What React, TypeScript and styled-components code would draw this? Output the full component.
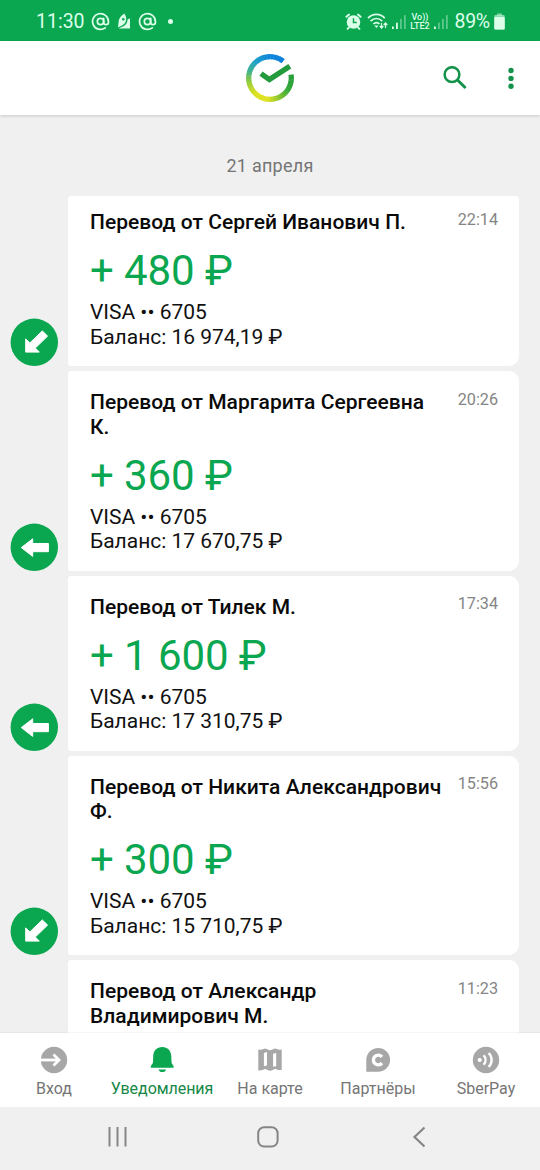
import React from "react";
import styled, { createGlobalStyle } from "styled-components";
import { AtSign } from "lucide-react";

const green = "#0aa650";

const GlobalStyle = createGlobalStyle`
  * { box-sizing: border-box; }
  body { margin: 0; background: #f0f0f0; font-family: Roboto, "Liberation Sans", sans-serif; }
`;

const Screen = styled.div`
  width: 540px;
  height: 1170px;
  display: flex;
  flex-direction: column;
  overflow: hidden;
  background: #f0f0f0;
`;

const StatusBar = styled.div`
  height: 41px;
  flex: none;
  display: flex;
  justify-content: space-between;
  align-items: center;
  padding: 2px 35.5px 0 36px;
  background: ${green};
  color: #dcffea;
  font-size: 19.5px;
`;

const StatusGroup = styled.div`
  display: flex;
  align-items: center;
  svg { display: block; flex: none; }
`;

const Clock = styled.span`
  width: 54.5px;
  white-space: nowrap;
`;

const StatusDot = styled.span`
  width: 5px;
  height: 5px;
  margin: -1px 0 0 11.5px;
  border-radius: 50%;
  background: #dcffea;
`;

const Network = styled.span`
  width: 22px;
  margin: 0 2px 0 3px;
  display: flex;
  flex-direction: column;
  align-items: center;
  font-size: 9px;
  line-height: 9px;
  font-weight: 500;
  white-space: nowrap;
`;

const Percent = styled.span`
  width: 39px;
  margin-left: 6.5px;
  letter-spacing: -0.3px;
  white-space: nowrap;
`;

const Header = styled.header`
  height: 74px;
  flex: none;
  position: relative;
  z-index: 1;
  display: grid;
  grid-template-columns: 1fr 48px 1fr;
  align-items: center;
  padding: 0 23px;
  background: #fff;
  box-shadow: 0 1px 3px rgba(0, 0, 0, 0.16);
  svg { display: block; }
`;

const Actions = styled.div`
  grid-column: 3;
  display: flex;
  justify-content: flex-end;
  align-items: center;
  gap: 38px;
`;

const Logo = styled.div`
  grid-column: 2;
`;

const Feed = styled.main`
  flex: 1;
  min-height: 0;
  overflow: hidden;
`;

const DateLabel = styled.div`
  height: 81px;
  padding-top: 40px;
  text-align: center;
  font-size: 18px;
  line-height: 21px;
  letter-spacing: 0.25px;
  color: #757575;
`;

const Row = styled.div`
  display: flex;
  align-items: flex-end;
  margin-bottom: 5px;
  padding: 0 21px 0 10px;
`;

const Badge = styled.div`
  width: 48px;
  height: 48px;
  margin-right: 10px;
  flex: none;
  svg { display: block; }
`;

const Card = styled.article<{ $first?: boolean }>`
  flex: 1;
  display: flex;
  align-items: flex-start;
  padding: ${(p) => (p.$first ? 14 : 19)}px 21px 17px 22px;
  background: #fff;
  border-radius: ${(p) => (p.$first ? "3px 4px 10px 3px" : "3px 10px 10px 3px")};
`;

const Body = styled.div`
  width: 353px;
  font-size: 21px;
  line-height: 24.5px;
  letter-spacing: -0.02px;
  color: #111;
`;

const Title = styled.h2`
  margin: 0;
  font-size: 21px;
  line-height: 24.5px;
  font-weight: 500;
  letter-spacing: 0.03px;
  color: #0a0a0a;
`;

const Amount = styled.div`
  margin: 11.5px 0 5px;
  font-size: 42px;
  line-height: 49px;
  letter-spacing: -0.1px;
  color: ${green};
`;

const Time = styled.time`
  flex: 1;
  margin-top: -0.5px;
  text-align: right;
  font-size: 16.2px;
  line-height: 19px;
  color: #858585;
  white-space: nowrap;
`;

const TabBar = styled.nav`
  height: 74px;
  flex: none;
  display: grid;
  grid-template-columns: repeat(5, 108px);
  background: #fff;
  box-shadow: 0 -1px 1px rgba(0, 0, 0, 0.04);
`;

const Tab = styled.div<{ $active?: boolean }>`
  display: flex;
  flex-direction: column;
  align-items: center;
  padding-top: 12.5px;
  font-size: 16px;
  line-height: 20px;
  letter-spacing: ${(p) => (p.$active ? "-0.05px" : "0")};
  white-space: nowrap;
  color: ${(p) => (p.$active ? "#168747" : "#757575")};
  svg { display: block; margin-bottom: 5.5px; }
`;

const SystemBar = styled.div`
  height: 63px;
  flex: none;
  display: grid;
  grid-template-columns: 150px 150px 150px;
  padding: 0 45px 3px 43px;
  place-items: center;
  background: #f0f0f0;
`;

const Signal = ({ level }: { level: number }) => (
  <svg width="15" height="16" viewBox="0 0 15 16" fill="#dcffea">
    {[0, 1, 2, 3].map((i) => (
      <rect key={i} x={1 + i * 4} y={12.5 - i * 3.8} width="1.8" height={2.5 + i * 3.8} opacity={i < level ? 1 : 0.4} />
    ))}
  </svg>
);

const AlarmIcon = () => (
  <svg width="17" height="17" viewBox="0 0 18 18">
    <g stroke="#dcffea" strokeWidth="2" strokeLinecap="round">
      <path d="M1.5 4 4.3 1.6M16.5 4 13.7 1.6M4 15.5l-1.3 1.3M14 15.5l1.3 1.3" />
    </g>
    <circle cx="9" cy="9.5" r="7.2" fill="#dcffea" />
    <path d="M9 5.5v4.6h3.5" fill="none" stroke={green} strokeWidth="1.6" />
  </svg>
);

const WifiIcon = () => (
  <svg width="21" height="17" viewBox="0 0 21 17" fill="none" stroke="#dcffea">
    <path d="M1 5.2C5.8.2 13 .2 17.8 5.2M3.6 8.2c3.4-3.6 8.2-3.6 11.6 0M6.4 11c1.9-1.9 4.2-1.9 6 0" strokeWidth="1.7" />
    <path d="M7.3 12.6h4.2L9.4 15z" fill="#dcffea" stroke="none" />
    <path d="M14.5 10v4.7M12.7 13l1.8 2 1.8-2M18.5 15v-4.7M16.7 12l1.8-2 1.8 2" strokeWidth="1.2" />
  </svg>
);

const BatteryIcon = () => (
  <svg width="11" height="17" viewBox="0 0 11 17" fill="#dcffea">
    <rect x="3" y="0.5" width="5" height="2" opacity="0.55" />
    <rect x="0.3" y="2" width="10.4" height="14.4" rx="1" opacity="0.6" />
    <rect x="0.3" y="4" width="10.4" height="12.4" rx="1" />
  </svg>
);

const LeafIcon = () => (
  <svg width="14" height="17" viewBox="0 0 14 17">
    <path d="M7.2.6C4.2 3 1.6 5.6 1.6 9.2L1 14.4l2-1C6.8 12.2 9 10 9.2 6.6 9.3 4.2 8.5 2.2 7.2.6z" fill="#dcffea" />
    <path d="M10.6 6.2 13 5.4V15.6H1.8l1.6-1.2c4.6-1 7-3.8 7.2-8.2z" fill="#dcffea" />
    <circle cx="6.3" cy="6.3" r="1.3" fill={green} />
  </svg>
);

// Ring colours by angle, counter-clockwise from the gap beside the tick.
const ringStops: [number, number[]][] = [
  [52, [10, 124, 220]],
  [95, [14, 135, 218]],
  [130, [28, 160, 200]],
  [160, [62, 178, 140]],
  [190, [150, 205, 50]],
  [225, [222, 224, 30]],
  [262, [222, 226, 30]],
  [295, [130, 195, 48]],
  [325, [50, 168, 56]],
  [371, [33, 154, 56]],
];

const ringColor = (angle: number) => {
  const i = Math.max(1, ringStops.findIndex(([a]) => a >= angle));
  const [a0, c0] = ringStops[i - 1];
  const [a1, c1] = ringStops[i];
  const t = (angle - a0) / (a1 - a0);
  return `rgb(${c0.map((v, k) => Math.round(v + (c1[k] - v) * t)).join(",")})`;
};

const ringPoint = (angle: number) => {
  const r = (angle * Math.PI) / 180;
  return `${(24 + 21.3 * Math.cos(r)).toFixed(2)} ${(24 - 21.3 * Math.sin(r)).toFixed(2)}`;
};

const LogoIcon = () => (
  <svg width="48" height="48" viewBox="0 0 48 48" fill="none" strokeWidth="5.2">
    {Array.from({ length: 80 }, (_, i) => {
      const a = 52 + i * 4;
      if (a >= 368) return null;
      const end = Math.min(a + 5, 370);
      return <path key={a} d={`M${ringPoint(a)}A21.3 21.3 0 0 0 ${ringPoint(end)}`} stroke={ringColor(a)} />;
    })}
    <path d="M15 19.6 23.4 25.6 43.8 12.2" stroke="#239a3c" strokeWidth="5.4" />
  </svg>
);

const BadgeArrow = ({ diagonal }: { diagonal?: boolean }) => (
  <svg width="48" height="48" viewBox="0 0 48 48" fill="#fff" stroke="#fff" strokeWidth="1" strokeLinejoin="round">
    <circle cx="24.3" cy="24.3" r="23.7" fill={green} stroke="none" />
    {diagonal ? (
      <path d="M15.7 34.1V20.9l4.2 4L32.3 12.9l5.3 5.2-12.3 12 4 4z" />
    ) : (
      <path d="M11.3 24.6 22.7 15.8v4.7h15.7v8.2H22.7v4.7z" />
    )}
  </svg>
);

const tabIcons = {
  login: (
    <>
      <circle cx="14" cy="14" r="13.2" fill="#a7a7a7" />
      <path d="M0 14h17" stroke="#fff" strokeWidth="2.8" />
      <path d="m13.5 8.5 5.5 5.5-5.5 5.5" fill="none" stroke="#fff" strokeWidth="2.8" />
    </>
  ),
  bell: (
    <>
      <path d="M14.3.9C8.8.9 5.4 4.4 5.2 10.2L5 16.3c-.1 1.7-2.2 3-2.2 4.1v1.3h22.8v-1.3c0-1.1-2-2.4-2.1-4.1l-.2-6.1C23.1 4.4 19.6.9 14.3.9z" fill={green} />
      <path d="M10.5 23.4h7.6c-.5 1.7-1.8 2.6-3.8 2.6s-3.2-.9-3.8-2.6z" fill={green} />
    </>
  ),
  map: (
    <>
      <path d="M2.3 3.6c2.6.6 4.5-.6 6.8-1.2 2.1.5 3.1 1.8 5 1.8s3-1.3 5-1.8c2.3.6 4.1 1.8 6.6 1.2v20.2c-2.6.6-4.3-.3-6.6-.8-1.9.5-3.1 1.8-5 1.8s-2.9-1.3-5-1.8c-2.3.5-4 2-6.8 1.4z" fill="#a7a7a7" />
      <path d="m7.9 6.9 3.1-.9v13.4l-3.1.9zM17.1 7.8l3.1-.9v13.4l-3.1.5z" fill="#fff" />
    </>
  ),
  partners: (
    <>
      <path d="M2.3 25.8V14A11.9 11.9 0 1 1 14.2 25.8z" fill="#a7a7a7" />
      <path d="M18 10.8a4.9 4.9 0 1 0 0 6.4" fill="none" stroke="#fff" strokeWidth="3.4" />
    </>
  ),
  pay: (
    <>
      <circle cx="14" cy="14" r="13.2" fill="#a7a7a7" />
      <circle cx="7.7" cy="14" r="2.1" fill="#fff" />
      <path d="M11.7 9.3c2.4 2.7 2.4 6.7 0 9.4M16.7 7c3.9 4 3.9 10 0 14" fill="none" stroke="#fff" strokeWidth="2.4" />
    </>
  ),
};

const tabs: { label: string; icon: keyof typeof tabIcons }[] = [
  { label: "Вход", icon: "login" },
  { label: "Уведомления", icon: "bell" },
  { label: "На карте", icon: "map" },
  { label: "Партнёры", icon: "partners" },
  { label: "SberPay", icon: "pay" },
];

type Transfer = { from: string; time: string; amount?: string; balance?: string; diagonal?: boolean };

const transfers: Transfer[] = [
  { from: "Сергей Иванович П.", amount: "480", balance: "16 974,19", time: "22:14", diagonal: true },
  { from: "Маргарита Сергеевна К.", amount: "360", balance: "17 670,75", time: "20:26" },
  { from: "Тилек М.", amount: "1 600", balance: "17 310,75", time: "17:34" },
  { from: "Никита Александрович Ф.", amount: "300", balance: "15 710,75", time: "15:56", diagonal: true },
  { from: "Александр Владимирович М.", time: "11:23" },
];

export default function App() {
  return (
    <Screen>
      <GlobalStyle />
      <StatusBar>
        <StatusGroup>
          <Clock>11:30</Clock>
          <AtSign size={19} strokeWidth={2.2} />
          <svg width="7" height="1" />
          <LeafIcon />
          <svg width="7" height="1" />
          <AtSign size={19} strokeWidth={2.2} />
          <StatusDot />
        </StatusGroup>
        <StatusGroup>
          <AlarmIcon />
          <svg width="5.5" height="1" />
          <WifiIcon />
          <svg width="3" height="1" />
          <Signal level={2} />
          <Network>
            <span>Vo))</span>
            <span>LTE2</span>
          </Network>
          <Signal level={1} />
          <Percent>89%</Percent>
          <BatteryIcon />
        </StatusGroup>
      </StatusBar>
      <Header>
        <Logo><LogoIcon /></Logo>
        <Actions>
          <svg width="24" height="24" viewBox="0 0 24 24" fill="none" stroke="#14924a" strokeWidth="2.5">
            <circle cx="9" cy="8.6" r="7.4" />
            <path d="m14.2 13.8 8.4 8.2" strokeWidth="3" />
          </svg>
          <svg width="12" height="24" viewBox="0 0 12 24" fill="#14924a">
            <circle cx="6" cy="4.5" r="2.7" />
            <circle cx="6" cy="12.4" r="2.7" />
            <circle cx="6" cy="20.3" r="2.7" />
          </svg>
        </Actions>
      </Header>
      <Feed>
        <DateLabel>21 апреля</DateLabel>
        {transfers.map((t, i) => (
          <Row key={t.time}>
            <Badge>{t.amount && <BadgeArrow diagonal={t.diagonal} />}</Badge>
            <Card $first={i === 0}>
              <Body>
                <Title>Перевод от {t.from}</Title>
                {t.amount && (
                  <>
                    <Amount>+ {t.amount} ₽</Amount>
                    <div>VISA •• 6705</div>
                    <div>Баланс: {t.balance} ₽</div>
                  </>
                )}
              </Body>
              <Time>{t.time}</Time>
            </Card>
          </Row>
        ))}
      </Feed>
      <TabBar>
        {tabs.map((t) => (
          <Tab key={t.icon} $active={t.icon === "bell"}>
            <svg width="28" height="28" viewBox="0 0 28 28">{tabIcons[t.icon]}</svg>
            {t.label}
          </Tab>
        ))}
      </TabBar>
      <SystemBar>
        <svg width="22" height="22" viewBox="0 0 22 22" stroke="#858585" strokeWidth="2">
          <path d="M2.5 1v19.5M10.5 1v19.5M18.5 1v19.5" />
        </svg>
        <svg width="22" height="22" viewBox="0 0 22 22" fill="none" stroke="#858585" strokeWidth="2">
          <rect x="1.2" y="1.2" width="19.4" height="19.4" rx="6" />
        </svg>
        <svg width="14" height="22" viewBox="0 0 14 22" fill="none" stroke="#858585" strokeWidth="2.2">
          <path d="M13.5 1.5 3.5 11l10 9.5" />
        </svg>
      </SystemBar>
    </Screen>
  );
}
